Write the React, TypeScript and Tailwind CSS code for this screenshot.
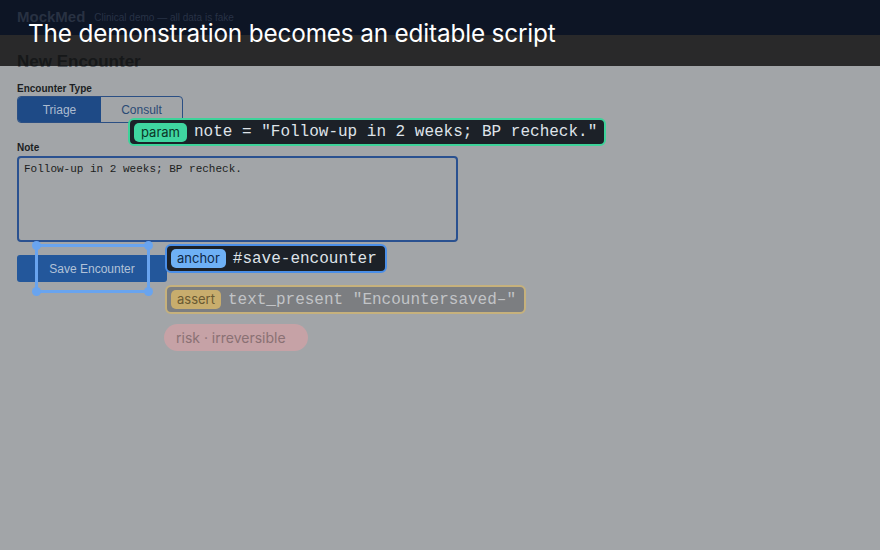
import React from "react";

const mono = { fontFamily: '"Liberation Mono", "DejaVu Sans Mono", monospace' };

export default function App() {
  return (
    <div
      className="relative w-[880px] h-[550px] overflow-hidden bg-[#a2a5a8]"
      style={{ fontFamily: 'Inter, "Liberation Sans", Arial, sans-serif' }}
    >
      {/* header */}
      <div className="h-[35px] bg-[#0d1525] flex items-center px-[17px] gap-[9px]">
        <span className="text-[15px] font-bold text-[#283142]" style={{ fontFamily: '"Liberation Sans", Arial, sans-serif' }}>MockMed</span>
        <span className="text-[10px] text-[#283245]" style={{ fontFamily: '"Liberation Sans", Arial, sans-serif' }}>Clinical demo — all data is fake</span>
      </div>

      {/* page body */}
      <div className="px-[17px] pt-[17px]" style={{ fontFamily: '"Liberation Sans", Arial, sans-serif' }}>
        <h1 className="text-[17px] font-bold leading-[20px] text-[#5a5f66]">New Encounter</h1>
        <div className="mt-[11px] text-[10px] font-bold leading-[12px] text-[#1b1e23]">Encounter Type</div>
        <div className="mt-[1px] flex w-[166px] h-[27px] rounded-[4px] border border-[#2b4f84] overflow-hidden">
          <div className="w-[83px] bg-[#1e4a86] flex items-center justify-center text-[12px] text-[#adbcd0]">Triage</div>
          <div className="flex-1 flex items-center justify-center text-[12px] text-[#2a4a75]">Consult</div>
        </div>
        <div className="mt-[19px] text-[10px] font-bold leading-[12px] text-[#1b1e23]">Note</div>
        <div className="mt-[2px] w-[441px] h-[86px] rounded-[4px] border-2 border-[#2a5190] px-[5px] py-[3px] text-[11px] leading-[16px] text-[#1c1e21]" style={mono}>
          Follow-up in 2 weeks; BP recheck.
        </div>
        <div className="mt-[13px] w-[150px] h-[27px] rounded-[3px] bg-[#23579b] flex items-center justify-center text-[12px] text-[#b2c2d8]">
          Save Encounter
        </div>
      </div>

      {/* selection box */}
      <div className="absolute left-[35px] top-[244px] w-[115px] h-[49px] border-[3px] border-[#69a4ef]">
        <div className="absolute -left-[6px] -top-[6px] w-[9px] h-[9px] rounded-full bg-[#69a4ef]" />
        <div className="absolute -right-[6px] -top-[6px] w-[9px] h-[9px] rounded-full bg-[#69a4ef]" />
        <div className="absolute -left-[6px] -bottom-[6px] w-[9px] h-[9px] rounded-full bg-[#69a4ef]" />
        <div className="absolute -right-[6px] -bottom-[6px] w-[9px] h-[9px] rounded-full bg-[#69a4ef]" />
      </div>

      {/* param card */}
      <div className="absolute left-[128px] top-[118px] h-[28px] w-[478px] rounded-[6px] border-2 border-[#3ed39a] bg-[#1c2128] flex items-center pl-[4px] gap-[7px]">
        <span className="h-[19px] px-[7px] rounded-[5px] bg-[#3fd6a0] text-[#0c3527] text-[13px] leading-[19px]">param</span>
        <span className="text-[16px] text-[#dfe3e8] whitespace-pre" style={mono}>note = "Follow-up in 2 weeks; BP recheck."</span>
      </div>

      {/* anchor card */}
      <div className="absolute left-[165px] top-[244px] h-[29px] w-[222px] rounded-[6px] border-2 border-[#4b8fe8] bg-[#1c2128] flex items-center pl-[4px] gap-[7px]">
        <span className="h-[19px] px-[6px] rounded-[5px] bg-[#6eb0f5] text-[#0f2846] text-[13px] leading-[19px]">anchor</span>
        <span className="text-[16px] text-[#dfe3e8] whitespace-pre" style={mono}>#save-encounter</span>
      </div>

      {/* assert card (faded) */}
      <div className="absolute left-[165px] top-[285px] h-[29px] w-[361px] rounded-[6px] border-2 border-[#c6b17c] bg-[#7c7e81] flex items-center pl-[4px] gap-[7px]">
        <span className="h-[19px] px-[6px] rounded-[5px] bg-[#c8ad6d] text-[#6a5a32] text-[13px] leading-[19px]">assert</span>
        <span className="text-[16px] text-[#c2c4c7] whitespace-pre" style={mono}>text_present "Encountersaved–"</span>
      </div>

      {/* risk pill (faded) */}
      <div className="absolute left-[164px] top-[324px] h-[27px] w-[144px] rounded-full bg-[#c6a2a6] flex items-center pl-[12px] text-[14px] text-[#8a7174]">
        risk · irreversible
      </div>

      {/* title band */}
      <div className="absolute left-0 top-0 w-full h-[66px] flex items-center pl-[28px] pt-[1px]">
        <div className="absolute left-0 top-[35px] w-full h-[31px] bg-[rgba(0,0,0,0.75)]" />
        <span className="relative text-[24.3px] text-white tracking-[-0.15px]">The demonstration becomes an editable script</span>
      </div>
    </div>
  );
}
